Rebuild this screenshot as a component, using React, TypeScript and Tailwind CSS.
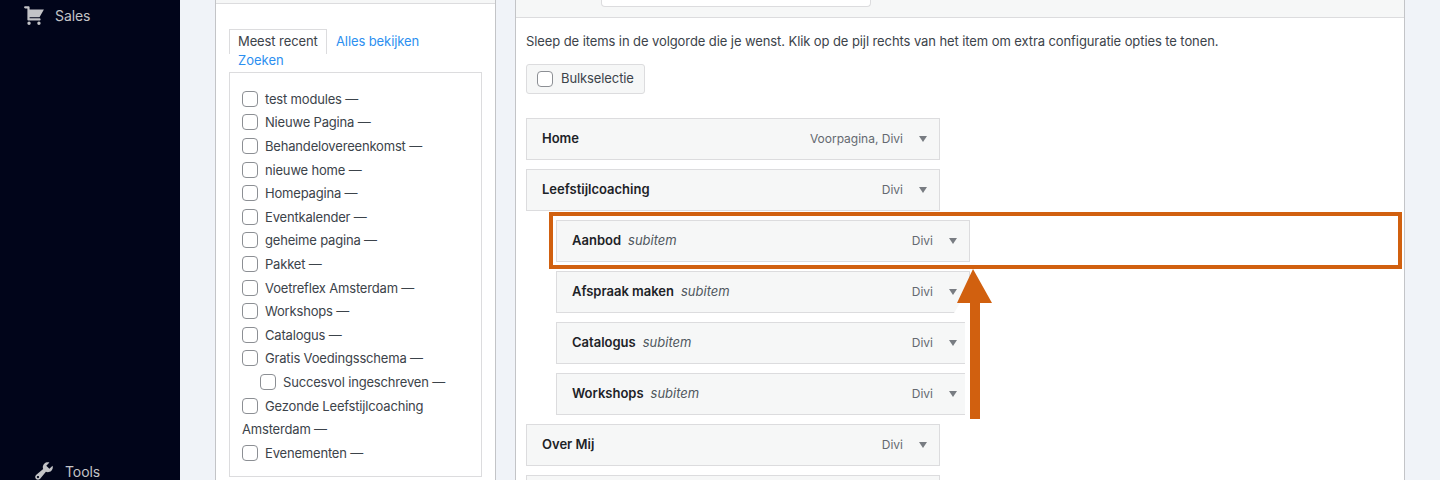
const recentPages = [
  { label: "test modules —" },
  { label: "Nieuwe Pagina —" },
  { label: "Behandelovereenkomst —" },
  { label: "nieuwe home —" },
  { label: "Homepagina —" },
  { label: "Eventkalender —" },
  { label: "geheime pagina —" },
  { label: "Pakket —" },
  { label: "Voetreflex Amsterdam —" },
  { label: "Workshops —" },
  { label: "Catalogus —" },
  { label: "Gratis Voedingsschema —" },
  { label: "Succesvol ingeschreven —", child: true },
  { label: "Gezonde Leefstijlcoaching Amsterdam —" },
  { label: "Evenementen —" },
];

const menuItems = [
  { title: "Home", meta: "Voorpagina, Divi" },
  { title: "Leefstijlcoaching", meta: "Divi" },
  { title: "Aanbod", meta: "Divi", sub: true },
  { title: "Afspraak maken", meta: "Divi", sub: true },
  { title: "Catalogus", meta: "Divi", sub: true },
  { title: "Workshops", meta: "Divi", sub: true },
  { title: "Over Mij", meta: "Divi" },
  { title: "", meta: "" },
];

function Checkbox({ className = "" }: { className?: string }) {
  return <span className={`inline-block w-4 h-4 shrink-0 rounded-[4px] border border-[#8c8f94] bg-white ${className}`} />;
}

function MenuItem({ title, meta, sub }: { title: string; meta: string; sub?: boolean }) {
  return (
    <div className={`flex items-center justify-between shrink-0 w-[414px] h-[42px] pl-[15px] pr-[12px] border border-[#dcdcde] bg-[#f6f7f7] ${sub ? "ml-[30px]" : ""}`}>
      <div className="flex items-center gap-[7px]">
        <span className="text-[13px] font-semibold text-[#1d2327]">{title}</span>
        {sub && <span className="text-[13px] italic text-[#50575e]">subitem</span>}
      </div>
      {title && (
        <div className="flex items-center gap-[16px]">
          <span className="text-[12px] text-[#646970]">{meta}</span>
          <svg width="8" height="6" viewBox="0 0 8 6" className="text-[#787c82]">
            <path d="M0 0h8L4 6z" fill="currentColor" />
          </svg>
        </div>
      )}
    </div>
  );
}

export default function App() {
  return (
    <div className="relative flex w-[1440px] h-[480px] overflow-hidden bg-[#f0f3f8] text-[13px] text-[#3c434a] font-['Inter','Liberation_Sans',sans-serif]">
      {/* Admin sidebar */}
      <aside className="flex flex-col justify-between w-[180px] shrink-0 bg-[#01051a] text-[#c3c4c7]">
        <div className="flex items-center gap-[10px] pl-[23px] pt-[4px]">
          <svg width="22" height="22" viewBox="0 0 20 20" fill="currentColor">
            <path d="M6 13h9c.55 0 1 .45 1 1s-.45 1-1 1H5c-.55 0-1-.45-1-1V4H2c-.55 0-1-.45-1-1s.45-1 1-1h3c.55 0 1 .45 1 1v2h13l-4 7H6v1zm-.5 3c.83 0 1.5.67 1.5 1.5S6.33 19 5.5 19 4 18.33 4 17.5 4.67 16 5.5 16zm9 0c.83 0 1.5.67 1.5 1.5s-.67 1.5-1.5 1.5-1.5-.67-1.5-1.5.67-1.5 1.5-1.5z" />
          </svg>
          <span className="text-[14px] tracking-[-0.1px]">Sales</span>
        </div>
        <div className="flex items-center gap-[10px] pl-[33px] mb-[-2px]">
          <svg width="22" height="22" viewBox="0 0 20 20" fill="currentColor">
            <path d="M16.68 9.77c-1.34 1.34-3.3 1.67-4.95.99l-5.41 6.52c-.99.99-2.59.99-3.58 0s-.99-2.59 0-3.57l6.52-5.42c-.68-1.65-.35-3.61.99-4.95 1.28-1.28 3.12-1.62 4.72-1.06l-2.89 2.89 2.82 2.82 2.86-2.87c.53 1.58.18 3.39-1.08 4.65zM3.81 16.21c.4.39 1.04.39 1.43 0 .4-.4.4-1.04 0-1.43-.39-.4-1.03-.4-1.43 0-.39.39-.39 1.03 0 1.43z" />
          </svg>
          <span className="text-[14px] tracking-[-0.1px]">Tools</span>
        </div>
      </aside>

      {/* Left column: pages picker */}
      <section className="w-[281px] h-[600px] ml-[35px] shrink-0 border-l border-r border-[#c3c4c7] bg-white">
        <div className="h-[4px] border-b border-[#dcdcde] bg-[#f6f7f7]" />
        <div className="px-[13px] pt-[25px]">
          <div className="flex flex-wrap leading-[23px]">
            <span className="w-[98px] h-[25px] border border-b-0 border-[#dcdcde] pl-[8px] tracking-[-0.1px]">Meest recent</span>
            <span className="ml-[9px] mt-[1px] text-[#2c8ff0] tracking-[-0.1px]">Alles bekijken</span>
            <span className="w-full pl-[9px] text-[#2c8ff0] h-[18px] leading-[12px]">Zoeken</span>
          </div>
          <div className="w-[253px] h-[405px] border border-[#dcdcde] px-[12px] pt-[14.8px] tracking-[-0.18px]">
            <ul>
              {recentPages.map((page) => (
                <li key={page.label} className={`leading-[23.6px] ${page.child ? "pl-[18px]" : ""}`}>
                  <Checkbox className="align-[-3px] mr-[7px]" />
                  {page.label}
                </li>
              ))}
            </ul>
          </div>
        </div>
      </section>

      {/* Right column: menu structure */}
      <section className="w-[890px] h-[600px] ml-[19px] shrink-0 border-l border-r border-[#c3c4c7] bg-white">
        <div className="h-[18px] border-b border-[#dcdcde] bg-[#f6f7f7] pl-[85px]">
          <div className="w-[270px] h-[7px] border border-t-0 border-[#dcdcde] rounded-b-[4px] bg-white" />
        </div>
        <div className="pl-[10px] pt-[14px]">
          <p className="leading-[18px] tracking-[-0.09px]">Sleep de items in de volgorde die je wenst. Klik op de pijl rechts van het item om extra configuratie opties te tonen.</p>
          <div className="flex items-center gap-[8px] w-[119px] h-[30px] mt-[14px] pl-[10px] border border-[#dcdcde] rounded-[3px] bg-[#f6f7f7]">
            <Checkbox />
            <span className="tracking-[-0.1px]">Bulkselectie</span>
          </div>
          <div className="flex flex-col gap-[9px] mt-[24px]">
            {menuItems.map((item, i) => (
              <MenuItem key={i} title={item.title} meta={item.meta} sub={item.sub} />
            ))}
          </div>
        </div>
      </section>

      {/* Annotation drawn over the screenshot */}
      <div className="absolute left-[549px] top-[212px] w-[853px] h-[57px] border-4 border-[#d1600f]" />
      <svg className="absolute left-[950px] top-[265px]" width="50" height="160" viewBox="0 0 50 160">
        <path d="M15 150V48H4l6-10h22v112z" fill="#fff" />
        <path d="M23 4L42 38H30V154H20V38H7z" fill="#d1600f" />
      </svg>
    </div>
  );
}
